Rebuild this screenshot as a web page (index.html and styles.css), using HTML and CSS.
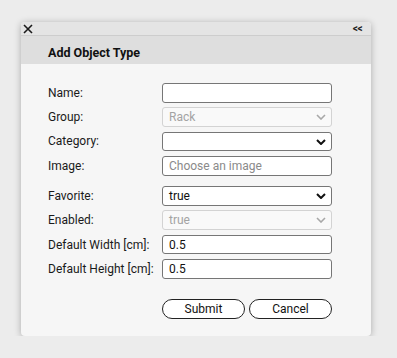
FILE: index.html
```html
<!DOCTYPE html>
<html lang="en">
<head>
<meta charset="utf-8">
<title>Add Object Type</title>
<link rel="stylesheet" href="styles.css">
</head>
<body>
<div class="dialog">
  <div class="titlebar">
    <svg class="close" width="10" height="10" viewBox="0 0 10 10"><path d="M1 1 L9 9 M9 1 L1 9" stroke="#1a1a1a" stroke-width="1.6" fill="none"/></svg>
    <span class="collapse">&lt;&lt;</span>
  </div>
  <div class="header">Add Object Type</div>
  <form class="body">
    <div class="fields">
      <label class="label">Name:</label>
      <input class="field" type="text">
      <label class="label">Group:</label>
      <div class="select disabled"><span class="value">Rack</span>
        <svg class="chev" width="10" height="6" viewBox="0 0 10 6"><path d="M1 1 L5 5 L9 1" stroke="#a8a8a8" stroke-width="1.6" fill="none"/></svg></div>
      <label class="label">Category:</label>
      <div class="select"><span class="value"></span>
        <svg class="chev" width="10" height="6" viewBox="0 0 10 6"><path d="M1 1 L5 5 L9 1" stroke="#111" stroke-width="2" fill="none"/></svg></div>
      <label class="label">Image:</label>
      <div class="field placeholder">Choose an image</div>
      <label class="label sep">Favorite:</label>
      <div class="select sep"><span class="value">true</span>
        <svg class="chev" width="10" height="6" viewBox="0 0 10 6"><path d="M1 1 L5 5 L9 1" stroke="#111" stroke-width="2" fill="none"/></svg></div>
      <label class="label">Enabled:</label>
      <div class="select disabled"><span class="value">true</span>
        <svg class="chev" width="10" height="6" viewBox="0 0 10 6"><path d="M1 1 L5 5 L9 1" stroke="#a8a8a8" stroke-width="1.6" fill="none"/></svg></div>
      <label class="label">Default Width [cm]:</label>
      <div class="field">0.5</div>
      <label class="label">Default Height [cm]:</label>
      <div class="field">0.5</div>
    </div>
    <div class="actions">
      <button type="button" class="btn">Submit</button>
      <button type="button" class="btn">Cancel</button>
    </div>
  </form>
</div>
</body>
</html>
```
FILE: styles.css
```css
html, body {
  margin: 0;
  padding: 0;
  background: #ececec;
  font-family: Roboto, "Liberation Sans", Arial, sans-serif;
  font-size: 12px;
  color: #1a1a1a;
}
.dialog {
  margin: 22px 0 0 21px;
  width: 350px;
  border-radius: 4px;
  overflow: hidden;
  box-shadow: 0 1px 7px rgba(0, 0, 0, 0.28);
  background: #f6f6f6;
}
.titlebar {
  height: 13px;
  background: #e4e4e4;
  border-bottom: 1px solid #cdcdcd;
  display: flex;
  align-items: center;
  justify-content: space-between;
  padding: 0 9px 0 2px;
}
.close {
  display: block;
  margin-top: 1px;
}
.collapse {
  font-size: 10px;
  font-weight: 700;
  letter-spacing: -0.5px;
  color: #222;
  line-height: 1;
  margin-top: 1px;
}
.header {
  box-sizing: border-box;
  height: 28px;
  background: #dedede;
  display: flex;
  align-items: center;
  padding: 4px 0 0 27px;
  font-weight: 700;
  font-size: 12.5px;
  color: #111;
}
.body {
  display: block;
  margin: 0;
  padding: 19px 39px 17px 27px;
}
.fields {
  display: grid;
  grid-template-columns: 114px 170px;
  row-gap: 4.85px;
  align-items: center;
}
.label {
  font-size: 12px;
  color: #1a1a1a;
}
.field, .select {
  box-sizing: border-box;
  height: 19.5px;
  width: 170px;
  border: 1px solid #767676;
  border-radius: 3px;
  background: #fff;
  padding: 0 6px;
  font-family: inherit;
  font-size: 12px;
  color: #111;
  display: flex;
  align-items: center;
  margin: 0;
  position: relative;
}
.fields .sep {
  margin-top: 5.7px;
}
.placeholder {
  color: #8a8a8a;
}
.select .value {
  flex: 1;
}
.chev {
  position: absolute;
  right: 5px;
  top: 6px;
}
.select.disabled {
  border-color: #d3d3d3;
  background: #f9f9f9;
  color: #a3a3a3;
}
.actions {
  display: flex;
  gap: 4px;
  margin-top: 20px;
  padding-left: 114px;
}
.btn {
  box-sizing: border-box;
  height: 20px;
  width: 83px;
  border: 1px solid #222;
  border-radius: 10px;
  background: #fff;
  font-family: inherit;
  font-size: 12px;
  color: #111;
  padding: 0;
  margin: 0;
}
```
